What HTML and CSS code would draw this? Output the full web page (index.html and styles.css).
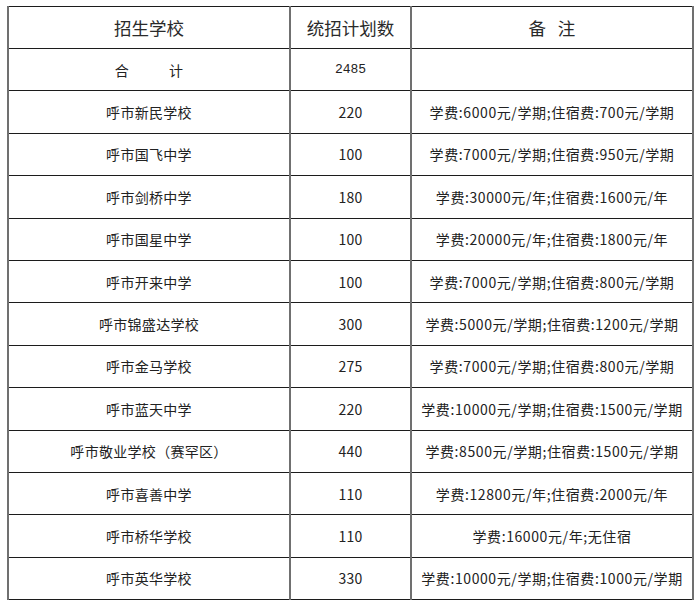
FILE: index.html
```html
<!DOCTYPE html>
<html lang="zh">
<head>
<meta charset="utf-8">
<link rel="stylesheet" href="styles.css">
</head>
<body>
<table class="plan">
  <colgroup>
    <col class="c-school">
    <col class="c-num">
    <col class="c-note">
  </colgroup>
  <thead>
    <tr><th>招生学校</th><th>统招计划数</th><th>备&nbsp;&nbsp;&nbsp;注</th></tr>
  </thead>
  <tbody>
    <tr><td>合<span class="gap"></span>计</td><td class="total">2485</td><td></td></tr>
    <tr><td>呼市新民学校</td><td>220</td><td class="note">学费:6000元/学期;住宿费:700元/学期</td></tr>
    <tr><td>呼市国飞中学</td><td>100</td><td class="note">学费:7000元/学期;住宿费:950元/学期</td></tr>
    <tr><td>呼市剑桥中学</td><td>180</td><td class="note">学费:30000元/年;住宿费:1600元/年</td></tr>
    <tr><td>呼市国星中学</td><td>100</td><td class="note">学费:20000元/年;住宿费:1800元/年</td></tr>
    <tr><td>呼市开来中学</td><td>100</td><td class="note">学费:7000元/学期;住宿费:800元/学期</td></tr>
    <tr><td>呼市锦盛达学校</td><td>300</td><td class="note">学费:5000元/学期;住宿费:1200元/学期</td></tr>
    <tr><td>呼市金马学校</td><td>275</td><td class="note">学费:7000元/学期;住宿费:800元/学期</td></tr>
    <tr><td>呼市蓝天中学</td><td>220</td><td class="note">学费:10000元/学期;住宿费:1500元/学期</td></tr>
    <tr><td>呼市敬业学校（赛罕区）</td><td>440</td><td class="note">学费:8500元/学期;住宿费:1500元/学期</td></tr>
    <tr><td>呼市喜善中学</td><td>110</td><td class="note">学费:12800元/年;住宿费:2000元/年</td></tr>
    <tr><td>呼市桥华学校</td><td>110</td><td class="note">学费:16000元/年;无住宿</td></tr>
    <tr><td>呼市英华学校</td><td>330</td><td class="note">学费:10000元/学期;住宿费:1000元/学期</td></tr>
  </tbody>
</table>
</body>
</html>
```

FILE: styles.css
```css
html, body {
  margin: 0;
  background: #ffffff;
}
body {
  padding: 6px 0 0 7px;
  font-family: "Noto Sans CJK SC", "Noto Sans", sans-serif;
  color: #222;
}
.plan {
  border-collapse: collapse;
  table-layout: fixed;
  width: 685px;
}
.c-school { width: 282px; }
.c-num { width: 121px; }
.c-note { width: 282px; }
.plan th, .plan td {
  border-top: 1px solid #1c1c1c;
  border-bottom: 1px solid #1c1c1c;
  border-left: 2px solid #707070;
  border-right: 2px solid #707070;
  text-align: center;
  vertical-align: middle;
  padding: 0;
  white-space: nowrap;
}
.plan th {
  height: 41px;
  font-size: 17.5px;
  font-weight: normal;
  color: #2a2a2a;
}
.plan td {
  height: 41.4px;
  font-size: 14px;
  letter-spacing: 0.3px;
}
.plan td.note {
  letter-spacing: 0.6px;
}
.gap {
  display: inline-block;
  width: 40px;
}
.total {
  font-family: "Liberation Mono", monospace;
}
.plan td.total {
  font-size: 13px;
  letter-spacing: 0;
}
```
